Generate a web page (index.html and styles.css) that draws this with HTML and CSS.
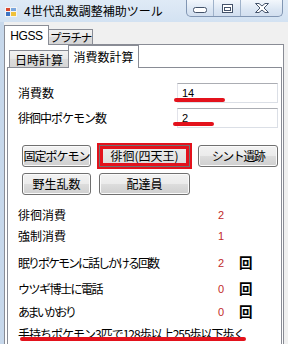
FILE: index.html
```html
<!DOCTYPE html>
<html lang="ja">
<head>
<meta charset="utf-8">
<title>4世代乱数調整補助ツール</title>
<link rel="stylesheet" href="styles.css">
</head>
<body>
<div class="window">
  <header class="titlebar">
    <svg class="app-icon" width="12" height="10" viewBox="0 0 12 10">
      <rect x="0" y="0" width="12" height="10" fill="#f4f4f4"/>
      <rect x="1" y="1" width="4" height="3" fill="#d9452b"/>
      <rect x="6" y="1" width="5" height="3" fill="#7aa6dc"/>
      <rect x="1" y="5" width="4" height="4" fill="#3f74c2"/>
      <rect x="6" y="5" width="5" height="4" fill="#efc13a"/>
    </svg>
    <span class="title">4世代乱数調整補助ツール</span>
    <div class="controls">
      <div class="ctl ctl-min">
        <svg width="14" height="6" viewBox="0 0 14 6"><rect x="0.5" y="0.5" width="13" height="5" rx="2" fill="#fff" stroke="#44536a"/></svg>
      </div>
      <div class="ctl ctl-max">
        <svg width="11" height="9" viewBox="0 0 11 9"><rect x="0.5" y="0.5" width="10" height="8" fill="#fff" stroke="#44536a"/><rect x="2.5" y="3.5" width="6" height="3" fill="none" stroke="#44536a"/></svg>
      </div>
      <div class="ctl ctl-close">
        <svg width="14" height="10" viewBox="0 0 14 10"><polygon points="0.5,0.5 4,0.5 7,3 10,0.5 13.5,0.5 9,5 13.5,9.5 10,9.5 7,7 4,9.5 0.5,9.5 5,5" fill="#fff" stroke="#44536a"/></svg>
      </div>
    </div>
  </header>
  <div class="frame">
    <div class="client">
      <div class="tabrow outer-tabs">
        <div class="tab active latin">HGSS</div>
        <div class="tab tab-plat">プラチナ</div>
      </div>
      <div class="panel outer-panel">
        <div class="tabrow inner-tabs">
          <div class="tab tab-date">日時計算</div>
          <div class="tab active tab-count">消費数計算</div>
        </div>
        <div class="panel inner-panel">
          <div class="field-row">
            <span class="label">消費数</span>
            <div class="textbox">14</div>
            <span class="mark mark-a"></span>
          </div>
          <div class="field-row field-row-2">
            <span class="label sp1">徘徊中ポケモン数</span>
            <div class="textbox">2</div>
            <span class="mark mark-b"></span>
          </div>

          <div class="btn-grid">
            <button class="btn sp1">固定ポケモン</button>
            <button class="btn btn-marked">徘徊(四天王)</button>
            <button class="btn sp15">シント遺跡</button>
            <button class="btn">野生乱数</button>
            <button class="btn">配達員</button>
          </div>

          <div class="stats">
            <div class="stat">
              <span class="label">徘徊消費</span><span class="value">2</span>
            </div>
            <div class="stat stat-2">
              <span class="label">強制消費</span><span class="value">1</span>
            </div>
            <div class="stat stat-3">
              <span class="label sp2">眠りポケモンに話しかける回数</span><span class="value">2</span><span class="kai">回</span>
            </div>
            <div class="stat stat-4">
              <span class="label sp15">ウツギ博士に電話</span><span class="value">0</span><span class="kai">回</span>
            </div>
            <div class="stat stat-5">
              <span class="label sp25">あまいかおり</span><span class="value">0</span><span class="kai">回</span>
            </div>
            <div class="stat stat-6">
              <span class="label label-wide sp1">手持ちポケモン3匹で128歩以上255歩以下歩く</span>
              <span class="mark mark-c"></span>
            </div>
          </div>
        </div>
      </div>
    </div>
  </div>
</div>
</body>
</html>
```

FILE: styles.css
```css
* { box-sizing: border-box; }

html, body {
  margin: 0;
  padding: 0;
}

body {
  width: 288px;
  height: 344px;
  overflow: hidden;
  background: #f0f0f0;
  font-family: "Noto Sans CJK JP", "Noto Sans", sans-serif;
  font-size: 12px;
  color: #000;
}

.window {
  width: 288px;
  height: 344px;
  overflow: hidden;
  display: flex;
  flex-direction: column;
}

/* ---------- title bar ---------- */
.titlebar {
  height: 22px;
  flex: none;
  display: flex;
  align-items: flex-start;
  background: linear-gradient(#dfeaf6, #d3e2f2);
}

.app-icon {
  margin: 7px 0 0 5px;
  flex: none;
}

.title {
  margin-left: 7px;
  line-height: 22px;
  font-size: 12px;
  color: #000;
  white-space: nowrap;
}

.controls {
  margin-left: auto;
  margin-right: 5px;
  display: flex;
  height: 17px;
  border: 1px solid #8196b3;
  border-top: none;
  border-radius: 0 0 5px 5px;
  overflow: hidden;
  background: linear-gradient(#f3f7fc, #dbe6f3 60%, #d2dfef);
}

.ctl {
  display: flex;
  align-items: center;
  justify-content: center;
  height: 16px;
}

.ctl + .ctl { border-left: 1px solid #9fb2ca; }

.ctl-min { width: 26px; padding-top: 4px; }
.ctl-max { width: 27px; }
.ctl-close { width: 42px; }

/* ---------- frame / client ---------- */
.frame {
  flex: 1;
  display: flex;
  padding-left: 4px;
  background: linear-gradient(to right, #c7d8eb, #b2c9e2);
}

.client {
  flex: 1;
  background: #f0f0f0;
  display: flex;
  flex-direction: column;
}

/* ---------- tabs ---------- */
.tabrow {
  height: 22px;
  flex: none;
  display: flex;
  align-items: flex-end;
}

.tab {
  border: 1px solid #898c95;
  border-bottom: none;
  display: flex;
  align-items: center;
  justify-content: center;
  padding-top: 2px;
  white-space: nowrap;
  background: linear-gradient(#f2f2f2, #e8e8e8 50%, #dcdcdc 50%, #d6d6d6);
  line-height: 1;
}

.tab.active {
  background: #fff;
  position: relative;
  z-index: 1;
  margin-bottom: -1px;
  padding-top: 0;
}

.tab + .tab { margin-left: -1px; }

.outer-tabs .tab { width: 45px; height: 15px; }
.outer-tabs .tab.active { height: 20px; }

.latin {
  font-family: "Liberation Sans", Arial, sans-serif;
  font-size: 12px;
  letter-spacing: -0.4px;
}

.tab-plat {
  font-size: 11.5px;
  letter-spacing: -1.2px;
}

.inner-tabs { padding-left: 2px; }
.tab-date { width: 60px; height: 17px; }
.tab-count { width: 71px; height: 23px; }

/* ---------- panels ---------- */
.outer-panel {
  width: 280px;
  height: 320px;
  flex: none;
  border: 1px solid #898c95;
  background: #fff;
  padding: 0 1px 0 2px;
  display: flex;
  flex-direction: column;
}

.inner-panel {
  width: 275px;
  height: 300px;
  flex: none;
  border: 1px solid #898c95;
  background: #fff;
  padding: 15px 0 0 10px;
}

/* ---------- fields ---------- */
.label {
  white-space: nowrap;
  line-height: 20px;
}

.sp1 { letter-spacing: -1px; }
.sp15 { letter-spacing: -1.5px; }
.sp2 { letter-spacing: -2px; }
.sp25 { letter-spacing: -2.6px; }

.field-row {
  position: relative;
  display: grid;
  grid-template-columns: 159px 101px;
  align-items: center;
  height: 20px;
}

.field-row-2 { margin-top: 5px; }

.textbox {
  height: 20px;
  border: 1px solid #dbdfe6;
  border-top-color: #abadb3;
  border-left-color: #e2e3ea;
  background: #fff;
  padding-left: 4px;
  font-family: "Liberation Sans", Arial, sans-serif;
  font-size: 11px;
  line-height: 18px;
}

.mark {
  position: absolute;
  height: 4px;
  background: #e3121c;
  border-radius: 2px;
  z-index: 2;
}

.mark-a { left: 156px; top: 15px; width: 51px; }
.mark-b { left: 155px; top: 14px; width: 41px; }
.mark-c { left: 2px; top: 13px; width: 226px; }

/* ---------- buttons ---------- */
.btn-grid {
  display: grid;
  grid-template-columns: 69px 91px 80px;
  grid-auto-rows: 22px;
  column-gap: 8px;
  row-gap: 6px;
  margin: 17px 0 0 4px;
}

.btn {
  font-family: "Noto Sans CJK JP", "Noto Sans", sans-serif;
  font-size: 12px;
  color: #000;
  padding: 0;
  margin: 0;
  border: 1px solid #707070;
  border-radius: 3px;
  background: linear-gradient(#f2f2f2 0%, #ebebeb 50%, #dddddd 50%, #cfcfcf 100%);
  box-shadow: inset 0 0 0 1px #fbfbfb;
  line-height: 1;
  white-space: nowrap;
}

.btn-marked {
  border-radius: 0;
  outline: 2px solid #e3121c;
  box-shadow: inset 0 0 0 3px #e3121c;
  background: linear-gradient(#ececec, #dcdcdc);
}

/* ---------- stats ---------- */
.stats {
  margin-top: 10px;
  display: flex;
  flex-direction: column;
}

.stat {
  position: relative;
  display: grid;
  grid-template-columns: 196px 14px 11px 14px;
  height: 20px;
  align-items: center;
}

.stat-2 { margin-top: 1px; }
.stat-3 { margin-top: 7px; }
.stat-4 { margin-top: 6px; }
.stat-5 { margin-top: 3px; }
.stat-6 { margin-top: 2px; }

.label-wide { grid-column: 1 / -1; }

.value {
  text-align: center;
  color: #c22a2a;
  font-family: "Liberation Sans", Arial, sans-serif;
  font-size: 11px;
}

.kai {
  grid-column: 4;
  font-weight: bold;
  font-size: 13.5px;
  line-height: 1;
}
```
